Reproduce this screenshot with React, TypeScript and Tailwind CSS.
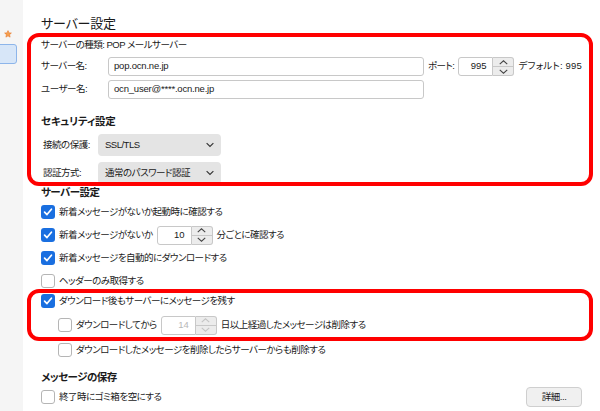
import React from "react";

const FONT = "[font-family:'Liberation_Sans','Noto_Sans_CJK_JP',sans-serif]";

function Check({ checked }: { checked: boolean }) {
  return checked ? (
    <span className="flex h-[14px] w-[14px] shrink-0 items-center justify-center rounded-[3px] bg-[#1a6fe0]">
      <svg viewBox="0 0 14 14" className="h-[12px] w-[12px]">
        <path d="M3 7.2 L5.8 10 L11 3.8" fill="none" stroke="white" strokeWidth="2" strokeLinecap="round" strokeLinejoin="round" />
      </svg>
    </span>
  ) : (
    <span className="h-[14px] w-[14px] shrink-0 rounded-[3px] border border-[#b5b5b5] bg-white" />
  );
}

function Stepper({ value, disabled = false, w = 36 }: { value: string; disabled?: boolean; w?: number }) {
  const stroke = disabled ? "#c4c4c4" : "#444";
  return (
    <div className="flex h-[19px] shrink-0 items-stretch">
      <div
        className={`flex h-full items-center justify-end rounded-l-[3px] border border-[#c8c8c8] bg-white pr-[6px] tracking-normal ${disabled ? "text-[#b8b8b8]" : "text-[#1a1a1a]"}`}
        style={{ width: w }}
      >
        {value}
      </div>
      <div className="flex w-[21px] flex-col rounded-r-[3px] border border-l-0 border-[#c8c8c8] bg-[#ececec]">
        <div className="flex flex-1 items-center justify-center border-b border-[#c8c8c8]">
          <svg viewBox="0 0 12 6" className="h-[5px] w-[11px]">
            <path d="M1.5 5 L6 1 L10.5 5" fill="none" stroke={stroke} strokeWidth="1.3" />
          </svg>
        </div>
        <div className="flex flex-1 items-center justify-center">
          <svg viewBox="0 0 12 6" className="h-[5px] w-[11px]">
            <path d="M1.5 1 L6 5 L10.5 1" fill="none" stroke={stroke} strokeWidth="1.3" />
          </svg>
        </div>
      </div>
    </div>
  );
}

function Select({ value }: { value: string }) {
  return (
    <div className="flex h-[22px] w-[123px] items-center justify-between rounded-[4px] bg-[#e4e4e4] pl-[7px] pr-[6px] text-[#1a1a1a]">
      <span>{value}</span>
      <svg viewBox="0 0 12 8" className="h-[6px] w-[10px]">
        <path d="M1.5 1.5 L6 6 L10.5 1.5" fill="none" stroke="#333" strokeWidth="1.5" />
      </svg>
    </div>
  );
}

function Row({ checked, children, className = "" }: { checked: boolean; children: React.ReactNode; className?: string }) {
  return (
    <div className={`flex h-[20px] items-center gap-[4px] ${className}`}>
      <Check checked={checked} />
      <div className="flex items-center gap-[4px]">{children}</div>
    </div>
  );
}

export default function App() {
  return (
    <div className={`relative flex h-[411px] w-[600px] overflow-hidden whitespace-nowrap bg-white text-[9.5px] tracking-[-0.5px] text-[#1a1a1a] ${FONT} [font-feature-settings:'palt']`}>
      {/* sidebar */}
      <div className="flex w-[23px] shrink-0 flex-col bg-[#f5f5f5] pt-[30px]">
        <div className="flex h-[9px] justify-end pr-[11px]">
          <svg viewBox="0 0 10 10" className="h-[8px] w-[8px]">
            <path d="M5 0.8 L6.2 3.6 L9.2 3.8 L6.9 5.8 L7.6 8.9 L5 7.3 L2.4 8.9 L3.1 5.8 L0.8 3.8 L3.8 3.6 Z" fill="#f6a04d" stroke="#e8782a" strokeWidth="0.8" />
          </svg>
        </div>
        <div className="ml-[-6px] mt-[5px] h-[20px] w-[23px] rounded-[3px] border border-[#8db5ea] bg-[#d7e6f8]" />
      </div>

      {/* main */}
      <div className="flex flex-1 flex-col pl-[18px] pr-[19px] pt-[16px]">
        <div className="h-[16px] text-[13px] leading-[16px] tracking-[-0.2px]">サーバー設定</div>

        <div className="mt-[6px] flex h-[14px] items-center">サーバーの種類: POP メールサーバー</div>

        <div className="mt-[5px] flex h-[19px] items-center">
          <span className="w-[67px] shrink-0">サーバー名:</span>
          <div className="flex h-[19px] w-[316px] shrink-0 items-center rounded-[3px] border border-[#c8c8c8] bg-white pl-[5px] tracking-[-0.2px]">pop.ocn.ne.jp</div>
          <span className="ml-[4px]">ポート:</span>
          <div className="ml-[4px]">
            <Stepper value="995" w={35} />
          </div>
          <span className="ml-[4px] tracking-[0.2px]">デフォルト: 995</span>
        </div>

        <div className="mt-[4px] flex h-[19px] items-center">
          <span className="w-[67px] shrink-0">ユーザー名:</span>
          <div className="flex h-[19px] w-[316px] shrink-0 items-center rounded-[3px] border border-[#c8c8c8] bg-white pl-[5px] tracking-[-0.2px]">ocn_user@****.ocn.ne.jp</div>
        </div>

        <div className="mt-[16px] flex h-[14px] items-center text-[10.5px] font-bold tracking-[-0.2px]">セキュリティ設定</div>

        <div className="mt-[5px] flex h-[22px] items-center">
          <span className="w-[57px] shrink-0 pl-[2px]">接続の保護:</span>
          <Select value="SSL/TLS" />
        </div>
        <div className="mt-[6px] flex h-[22px] items-center">
          <span className="w-[57px] shrink-0 pl-[2px]">認証方式:</span>
          <Select value="通常のパスワード認証" />
        </div>

        <div className="mt-[2px] flex h-[14px] items-center text-[10.5px] font-bold">サーバー設定</div>

        <div className="mt-[2px] flex flex-col">
          <Row checked>新着メッセージがないか起動時に確認する</Row>
          <Row checked className="mt-[3px]">
            <span>新着メッセージがないか</span>
            <Stepper value="10" w={35} />
            <span>分ごとに確認する</span>
          </Row>
          <Row checked className="mt-[3px]">新着メッセージを自動的にダウンロードする</Row>
          <Row checked={false} className="mt-[3px]">ヘッダーのみ取得する</Row>
          <Row checked className="mt-[0px]">ダウンロード後もサーバーにメッセージを残す</Row>
          <div className="mt-[4px] pl-[17px]">
            <Row checked={false}>
              <span>ダウンロードしてから</span>
              <Stepper value="14" disabled w={35} />
              <span>日以上経過したメッセージは削除する</span>
            </Row>
          </div>
          <div className="mt-[5px] pl-[17px]">
            <Row checked={false}>ダウンロードしたメッセージを削除したらサーバーからも削除する</Row>
          </div>
        </div>

        <div className="mt-[11px] flex h-[14px] items-center text-[10.5px] font-bold">メッセージの保存</div>

        <div className="mt-[2px] flex h-[20px] items-center justify-between">
          <Row checked={false}>終了時にゴミ箱を空にする</Row>
          <div className="flex h-[20px] w-[56px] items-center justify-center rounded-[4px] border border-[#cfcfcf] bg-[#f0f0f0]">詳細...</div>
        </div>
      </div>

      {/* annotation overlays */}
      <div className="pointer-events-none absolute left-[27px] top-[33px] h-[153px] w-[566px] rounded-[12px] border-[4px] border-[#ff0000]" />
      <div className="pointer-events-none absolute left-[27px] top-[289px] h-[52px] w-[566px] rounded-[12px] border-[4px] border-[#ff0000]" />
    </div>
  );
}
